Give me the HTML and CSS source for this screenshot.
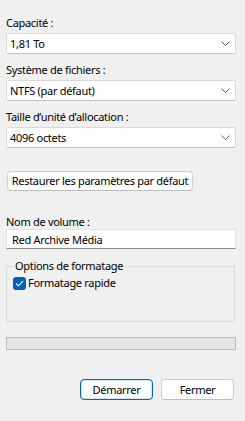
FILE: index.html
```html
<!DOCTYPE html>
<html>
<head>
  <title>Formater</title>
  <link rel="stylesheet" href="styles.css">
</head>
<body>
  <div class="dialog">
    <div class="field">
      <div class="label">Capacité :</div>
      <div class="combo">
        <span>1,81 To</span>
        <svg class="chevron" width="9" height="5" viewBox="0 0 9 5"><path d="M0.5 0.5 L4.5 4.5 L8.5 0.5" fill="none" stroke="#5f5f5f" stroke-width="1"/></svg>
      </div>
    </div>

    <div class="field">
      <div class="label">Système de fichiers :</div>
      <div class="combo">
        <span>NTFS (par défaut)</span>
        <svg class="chevron" width="9" height="5" viewBox="0 0 9 5"><path d="M0.5 0.5 L4.5 4.5 L8.5 0.5" fill="none" stroke="#5f5f5f" stroke-width="1"/></svg>
      </div>
    </div>

    <div class="field">
      <div class="label">Taille d’unité d’allocation :</div>
      <div class="combo">
        <span>4096 octets</span>
        <svg class="chevron" width="9" height="5" viewBox="0 0 9 5"><path d="M0.5 0.5 L4.5 4.5 L8.5 0.5" fill="none" stroke="#5f5f5f" stroke-width="1"/></svg>
      </div>
    </div>

    <div class="restore-row">
      <button class="btn restore">Restaurer les paramètres par défaut</button>
    </div>

    <div class="volume">
      <div class="label vol-label">Nom de volume :</div>
      <div class="text-input">Red Archive Média</div>
    </div>

    <fieldset class="group">
      <legend>Options de formatage</legend>
      <div class="check-row">
        <span class="checkbox">
          <svg width="9" height="7" viewBox="0 0 9 7"><path d="M1 3.5 L3.4 5.8 L8 1" fill="none" stroke="#fff" stroke-width="1.1"/></svg>
        </span>
        <span>Formatage rapide</span>
      </div>
    </fieldset>

    <div class="progress"></div>

    <div class="actions">
      <button class="btn primary">Démarrer</button>
      <button class="btn">Fermer</button>
    </div>
  </div>
</body>
</html>
```

FILE: styles.css
```css
body {
  margin: 0;
  background-color: #f0f0f0;
  font-family: "Noto Sans", "Open Sans", sans-serif;
  font-size: 11px;
  letter-spacing: -0.3px;
  color: #000;
}

.dialog {
  padding: 15px 9px 0 6px;
  display: flex;
  flex-direction: column;
}

.field {
  margin-bottom: 8px;
}

.field:nth-child(3) {
  margin-bottom: 0;
}

.label {
  line-height: 16px;
  margin-bottom: 2px;
  white-space: nowrap;
}

.combo {
  height: 21px;
  box-sizing: border-box;
  background-color: #fdfdfd;
  border: 1px solid #d9d9d9;
  border-bottom-color: #c4c4c4;
  border-radius: 2px;
  padding: 0 5px 0 3px;
  display: flex;
  align-items: center;
  justify-content: space-between;
  line-height: 19px;
}

.chevron {
  display: block;
}

.restore-row {
  margin-top: 23px;
  padding-left: 1px;
}

.btn {
  font-family: inherit;
  font-size: 11px;
  letter-spacing: -0.3px;
  color: #000;
  background-color: #fdfdfd;
  border: 1px solid #d0d0d0;
  border-bottom-color: #bdbdbd;
  border-radius: 4px;
  height: 21px;
  padding: 0;
  line-height: 19px;
  white-space: nowrap;
}

.restore {
  height: 20px;
  width: 186px;
  line-height: 18px;
}

.volume {
  margin-top: 23px;
}

.vol-label {
  line-height: 15px;
  margin-bottom: 0;
}

.text-input {
  height: 20px;
  box-sizing: border-box;
  background-color: #fff;
  border: 1px solid #e2e2e2;
  border-bottom-color: #8a8a8a;
  padding: 0 5px;
  line-height: 19px;
}

.group {
  margin: 9px 1px 0 0;
  padding: 0 6px;
  border: 1px solid #dcdcdc;
  height: 64px;
  box-sizing: border-box;
}

.group legend {
  padding: 0 2px;
  line-height: 16px;
}

.check-row {
  display: flex;
  align-items: center;
  gap: 2px;
  margin-top: 1px;
  line-height: 16px;
}

.checkbox {
  width: 13px;
  height: 13px;
  background-color: #005fb8;
  border-radius: 3px;
  display: flex;
  align-items: center;
  justify-content: center;
}

.progress {
  margin-top: 15px;
  height: 13px;
  box-sizing: border-box;
  background-color: #e6e6e6;
  border: 1px solid #bcbcbc;
}

.actions {
  margin-top: 29px;
  display: flex;
  justify-content: flex-end;
  gap: 8px;
  padding-right: 2px;
}

.actions .btn {
  width: 73px;
}

.primary {
  border: 1px solid #0067c0;
  box-shadow: inset 0 0 0 1px #cfe3f5;
}
```
